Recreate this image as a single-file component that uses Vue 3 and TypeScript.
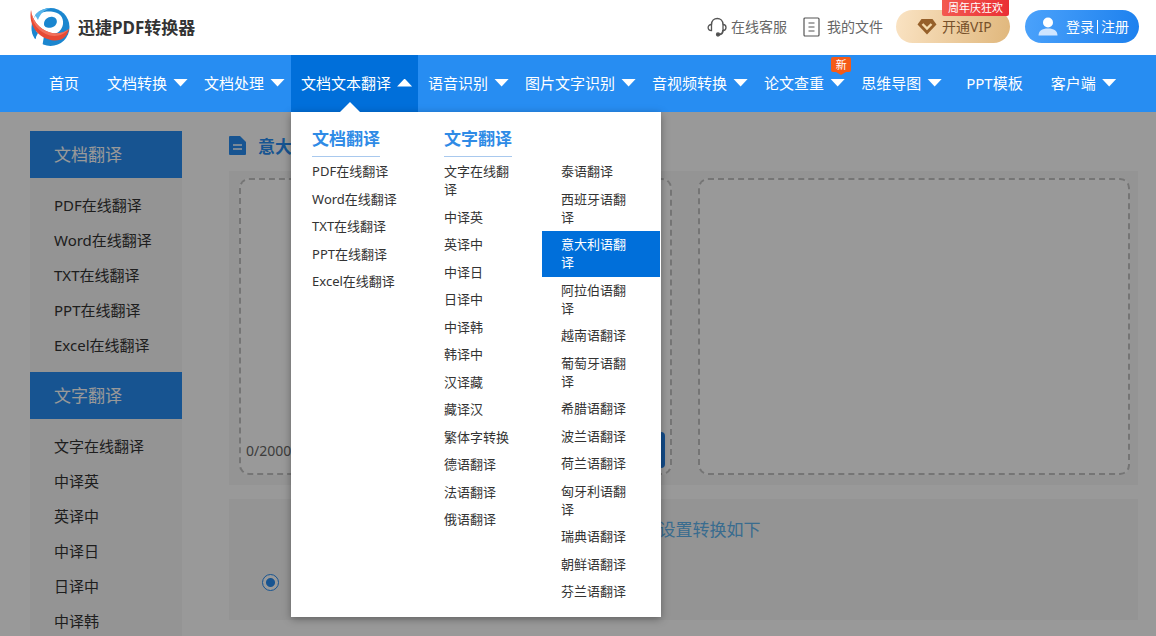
<script setup lang="ts">
import { ref } from 'vue'

interface NavItem {
  label: string
  menu?: boolean
  active?: boolean
  badge?: string
}

const navItems: NavItem[] = [
  { label: '首页' },
  { label: '文档转换', menu: true },
  { label: '文档处理', menu: true },
  { label: '文档文本翻译', menu: true, active: true },
  { label: '语音识别', menu: true },
  { label: '图片文字识别', menu: true },
  { label: '音视频转换', menu: true },
  { label: '论文查重', menu: true, badge: '新' },
  { label: '思维导图', menu: true },
  { label: 'PPT模板' },
  { label: '客户端', menu: true },
]

const docLinks: string[] = ['PDF在线翻译', 'Word在线翻译', 'TXT在线翻译', 'PPT在线翻译', 'Excel在线翻译']
const textLinks: string[] = [
  '文字在线翻译', '中译英', '英译中', '中译日', '日译中', '中译韩', '韩译中',
  '汉译藏', '藏译汉', '繁体字转换', '德语翻译', '法语翻译', '俄语翻译',
]
const moreLinks: string[] = [
  '泰语翻译', '西班牙语翻译', '意大利语翻译', '阿拉伯语翻译', '越南语翻译', '葡萄牙语翻译', '希腊语翻译',
  '波兰语翻译', '荷兰语翻译', '匈牙利语翻译', '瑞典语翻译', '朝鲜语翻译', '芬兰语翻译',
]
const current = '意大利语翻译'

const sideGroups = [
  { title: '文档翻译', links: docLinks },
  { title: '文字翻译', links: textLinks.slice(0, 6) },
]

const source = ref('')
const result = ref('')
const mode = ref('default')
</script>

<template>
  <div class="page">
    <header class="header">
      <a class="brand" href="#">
        <svg class="logo" viewBox="0 0 40 40" aria-hidden="true">
          <circle cx="20.500" cy="20" r="19" fill="#1b86cf" />
          <path d="M3 12C7 6 14 4 21 4.500C29 5 34 10 33 17C32 23 28 27 22 27C13 27 6 21 3 12Z" fill="#fff" />
          <path d="M5 8C9 3 15 1 21 1C14 3 10 7 8 13Z" fill="#57b4ea" />
          <path d="M14 17C14 12 19 9 23 10C28 11 28 17 24 19.500C20 22 14 21 14 17Z" fill="#1b86cf" />
          <path d="M6 23L14 29L12 41H0V36L6 33Z" fill="#fff" />
          <path d="M2 20L8 26L5 32C3 29 1 25 2 20Z" fill="#1b86cf" />
          <path d="M1 3C2 13 9 22 20 25.500C27 27.500 34 26 39 22C38 29 32 34 24 33.500C9 32 -2 19 1 3Z" fill="#e74a35" />
          <path d="M1 3C2 13 9 22 20 25.500C27 27.500 34 26 39 22C34 28 27 30 20 28.500C8 25 1 16 1 3Z" fill="#f2705a" />
        </svg>
        <span>迅捷PDF转换器</span>
      </a>
      <div class="tools">
        <a class="tool service" href="#">
          <svg viewBox="0 0 20 20" width="20" height="20" fill="none" stroke="#555" stroke-width="1.500" aria-hidden="true">
            <path d="M4.500 7.500C4.500 -0.500 16 -0.500 16 7.500" />
            <path d="M4.500 7.500C0 7.500 0 13.500 4.500 13.500Z" stroke-width="1.300" />
            <path d="M16 7.500C20 7.500 20 13.500 16 13.500Z" stroke-width="1.300" />
            <path d="M16 13C16 16 14 17.500 12 17.500" stroke-width="1.800" />
            <circle cx="11" cy="17.500" r="1.400" fill="#444" />
          </svg>
          在线客服
        </a>
        <a class="tool files" href="#">
          <svg viewBox="0 0 17 20" width="17" height="20" fill="none" stroke="#555" stroke-width="1.200" aria-hidden="true">
            <rect x="1" y="1" width="15" height="18" rx="1" />
            <path d="M5.500 6H11.500M5.500 10H11.500M5.500 14H11.500" />
          </svg>
          我的文件
        </a>
        <a class="pill vip" href="#">
          <svg viewBox="0 0 20 17" width="20" height="17" aria-hidden="true">
            <path d="M4.500 1H15.500L19.500 6.500L10 16.500L0.500 6.500Z" fill="#96602a" />
            <path d="M5.500 6L10 10.500L14.500 6" fill="none" stroke="#f6dcae" stroke-width="2.400" />
          </svg>
          开通VIP
          <span class="promo">周年庆狂欢</span>
        </a>
        <a class="pill login" href="#">
          <svg viewBox="0 0 20 19" width="20" height="19" aria-hidden="true">
            <circle cx="10" cy="5.500" r="5" fill="#fff" />
            <path d="M0.500 18.500C0.500 14 4 11.500 10 11.500S19.500 14 19.500 18.500Z" fill="#cfe5ff" />
          </svg>
          <span>登录</span><i class="bar"></i><span>注册</span>
        </a>
      </div>
    </header>

    <nav class="nav">
      <div
        v-for="item in navItems"
        :key="item.label"
        class="nav-item"
        :class="{ plain: !item.menu, active: item.active }"
      >
        <a class="nav-link" href="#">
          {{ item.label }}<i v-if="item.menu" class="caret"></i>
        </a>
        <span v-if="item.badge" class="new">{{ item.badge }}</span>
        <div v-if="item.active" class="dropdown">
          <section>
            <h3>文档翻译</h3>
            <ul>
              <li v-for="link in docLinks" :key="link"><a href="#">{{ link }}</a></li>
            </ul>
          </section>
          <section>
            <h3>文字翻译</h3>
            <ul>
              <li v-for="link in textLinks" :key="link"><a href="#">{{ link }}</a></li>
            </ul>
          </section>
          <section class="untitled">
            <ul>
              <li v-for="link in moreLinks" :key="link" :class="{ selected: link === current }">
                <a href="#">{{ link }}</a>
              </li>
            </ul>
          </section>
        </div>
      </div>
    </nav>

    <main class="main">
      <aside class="sidebar">
        <section v-for="group in sideGroups" :key="group.title">
          <h2>{{ group.title }}</h2>
          <ul>
            <li v-for="link in group.links" :key="link"><a href="#">{{ link }}</a></li>
          </ul>
        </section>
      </aside>
      <div class="content">
        <h1 class="title">
          <svg viewBox="0 0 17 19" width="17" height="19" aria-hidden="true">
            <path d="M1 0H11L17 6V18Q17 19 16 19H1Q0 19 0 18V1Q0 0 1 0Z" fill="#278df2" />
            <path d="M4 9H13M4 13H13" stroke="#fff" stroke-width="1.500" />
          </svg>
          {{ current }}
        </h1>
        <div class="panel editor">
          <div class="box">
            <textarea v-model="source" aria-label="原文"></textarea>
            <div class="box-foot">
              <span>{{ source.length }}/2000</span>
              <button type="button" class="submit" aria-label="翻译"></button>
            </div>
          </div>
          <div class="box">
            <textarea v-model="result" aria-label="译文" readonly></textarea>
          </div>
        </div>
        <div class="panel options">
          <p>设置转换如下</p>
          <input v-model="mode" type="radio" name="mode" value="default" aria-label="默认设置" />
        </div>
      </div>
    </main>
  </div>
</template>

<style>
body {
  margin: 0;
}
</style>

<style scoped>
* {
  box-sizing: border-box;
}

.page {
  display: flex;
  flex-direction: column;
  height: 100vh;
  overflow: hidden;
  background: #fff;
  color: #333;
  font-family: "Noto Sans", "Noto Sans CJK SC", sans-serif;
  font-size: 15px;
}

a {
  color: inherit;
  text-decoration: none;
}

ul,
h1,
h2,
h3,
p {
  margin: 0;
  padding: 0;
  list-style: none;
  font-weight: 400;
}

.header {
  flex: none;
  display: flex;
  align-items: center;
  justify-content: space-between;
  height: 55px;
  padding: 0 17px 2px 30px;
}

.brand {
  display: flex;
  align-items: center;
  gap: 8px;
  font-size: 17px;
  font-weight: 700;
}

.logo {
  width: 40px;
  height: 40px;
}

.tools {
  display: flex;
  align-items: center;
  color: #666;
  font-size: 14px;
  line-height: 20px;
}

.tool {
  display: flex;
  align-items: center;
  gap: 4px;
}

.files {
  gap: 7px;
  margin: 0 13px 0 16px;
}

.pill {
  position: relative;
  display: flex;
  align-items: center;
  width: 114px;
  height: 33px;
  border-radius: 17px;
}

.vip {
  gap: 5px;
  padding-left: 21px;
  background: linear-gradient(100deg, #fae3c3, #e0b77c);
  color: #77502a;
}

.promo {
  position: absolute;
  top: -10px;
  right: 1px;
  width: 67px;
  height: 16px;
  border-radius: 0 0 2px 2px;
  background: linear-gradient(90deg, #f35a50, #ea2f35);
  color: #fff;
  font-size: 11px;
  line-height: 16px;
  text-align: center;
}

.login {
  gap: 3px;
  margin-left: 15px;
  padding-left: 13px;
  background: linear-gradient(100deg, #4ba2fb, #1c80ee);
  color: #fff;
}

.login svg {
  margin-right: 5px;
}

.bar {
  width: 1px;
  height: 14px;
  background: #fff;
}

.nav {
  position: relative;
  z-index: 2;
  flex: none;
  display: flex;
  height: 57px;
  padding-left: 31px;
  background: #278df2;
  color: #fff;
}

.nav-item {
  position: relative;
  flex: none;
}

.nav-link {
  display: flex;
  align-items: center;
  gap: 6px;
  height: 57px;
  padding: 0 6px 2px 10px;
}

.plain .nav-link {
  padding: 0 18px 2px;
}

.caret {
  width: 15px;
  height: 8px;
  background: #fff;
  clip-path: polygon(0 0, 100% 0, 50% 100%);
}

.active {
  background: #006fda;
}

.active .caret {
  clip-path: polygon(50% 0, 100% 100%, 0 100%);
}

.active::after {
  content: "";
  position: absolute;
  bottom: 0;
  left: 49px;
  border: solid transparent;
  border-width: 0 10px 10px;
  border-bottom-color: #fff;
}

.new {
  position: absolute;
  top: 2px;
  right: 0;
  width: 20px;
  height: 15px;
  border-radius: 2px;
  background: #f55b17;
  font-size: 11px;
  line-height: 15px;
  text-align: center;
}

.new::after {
  content: "";
  position: absolute;
  top: 15px;
  left: 5px;
  border: solid transparent;
  border-width: 3px 5px 0;
  border-top-color: #f55b17;
}

.dropdown {
  position: absolute;
  top: 57px;
  left: 0;
  display: grid;
  grid-template-columns: 132px 117px 118px;
  padding: 11px 1px 11px 2px;
  background: #fff;
  box-shadow: 0 2px 8px rgba(0, 0, 0, 0.35);
  color: #333;
  font-size: 13px;
  line-height: 18px;
}

.dropdown h3 {
  width: max-content;
  margin-left: 19px;
  padding-bottom: 2px;
  border-bottom: 1px solid #a9c9ee;
  color: #2f8be6;
  font-size: 17px;
  font-weight: 700;
  line-height: 31px;
}

.untitled {
  padding-top: 34px;
}

.dropdown ul {
  padding-top: 1px;
}

.dropdown li a {
  display: block;
  padding: 4px 19px 6px;
}

.dropdown section:nth-child(n + 2) li a {
  padding-right: 30px;
}

.dropdown li:nth-child(even) a {
  padding-bottom: 5px;
}

.dropdown .selected {
  background: #006fda;
  color: #fff;
}

.main {
  position: relative;
  flex: 1 0 auto;
  display: flex;
  align-items: flex-start;
  gap: 47px;
  padding: 19px 18px 0 30px;
}

.main::after {
  content: "";
  position: absolute;
  inset: 0;
  background: rgba(0, 0, 0, 0.4);
}

.sidebar {
  flex: none;
  width: 152px;
  background: #f7f7f7;
}

.sidebar h2 {
  padding-left: 24px;
  background: #278df2;
  color: #fff;
  font-size: 17px;
  line-height: 47px;
}

.sidebar ul {
  padding: 10px 0 9px 24px;
  line-height: 35px;
}

.content {
  flex: 1;
  min-width: 0;
}

.title {
  display: flex;
  align-items: center;
  gap: 12px;
  height: 28px;
  color: #278df2;
  font-size: 17px;
  font-weight: 700;
}

.panel {
  background: #f7f7f7;
}

.editor {
  display: grid;
  grid-template-columns: 1fr 1fr;
  gap: 26px;
  height: 314px;
  margin-top: 12px;
  padding: 7px 8px 10px 10px;
}

.box {
  display: flex;
  flex-direction: column;
  padding: 5px;
  border: 2px dashed #c3c3c3;
  border-radius: 10px;
  background: #fff;
}

.box textarea {
  flex: 1;
  border: 0;
  background: transparent;
  resize: none;
  outline: 0;
  font: inherit;
}

.box-foot {
  display: flex;
  align-items: center;
  justify-content: space-between;
  color: #666;
  font-size: 14px;
}

.submit {
  width: 110px;
  height: 36px;
  border: 0;
  border-radius: 4px;
  background: #2080e8;
}

.options {
  height: 121px;
  margin-top: 14px;
  padding: 17px 33px;
}

.options p {
  padding-left: 52px;
  color: #5fb4ee;
  font-size: 17px;
  line-height: 28px;
  text-align: center;
}

.options input {
  display: block;
  appearance: none;
  width: 17px;
  height: 17px;
  margin: 30px 0 0;
  border: 1px solid #278df2;
  border-radius: 50%;
  background: radial-gradient(circle, #278df2 4px, #fff 5px);
}
</style>
